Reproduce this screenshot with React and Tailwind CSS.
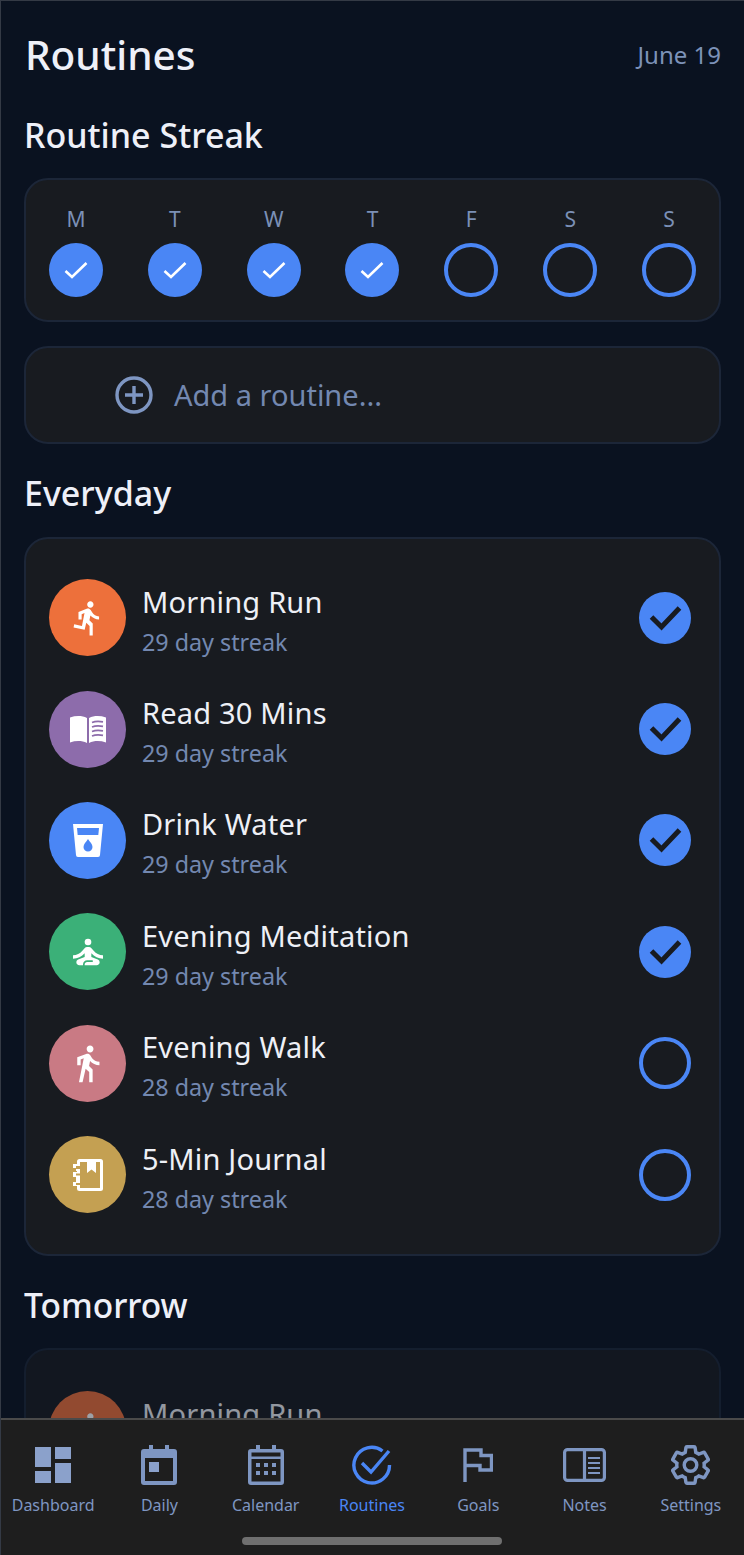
import React from "react";

const font = { fontFamily: '"Noto Sans", sans-serif' };

const RunIcon = () => (
  <svg viewBox="0 0 24 24" className="w-[38px] h-[38px]" fill="#fff">
    <path d="M13.49 5.48c1.1 0 2-.9 2-2s-.9-2-2-2-2 .9-2 2 .9 2 2 2zm-3.6 13.9l1-4.4 2.1 2v6h2v-7.5l-2.1-2 .6-3c1.3 1.5 3.3 2.5 5.5 2.5v-2c-1.9 0-3.5-1-4.3-2.4l-1-1.6c-.4-.6-1-1-1.7-1-.3 0-.5.1-.8.1l-5.2 2.2v4.7h2v-3.4l1.8-.7-1.6 8.1-4.9-1-.4 2 7 1.4z" />
  </svg>
);

const BookIcon = () => (
  <svg viewBox="0 0 36 28" className="w-[36px] h-[28px]">
    <path d="M0 2.5C6 .5 12 .5 17 3v25c-5-2.4-11-2.4-17-.6z" fill="#fff" />
    <path d="M19 3c5-2.5 11-2.5 17-.5v24.9c-6-1.8-12-1.8-17 .6z" fill="#fff" />
    <path d="M22 7.5c3-1.2 7-1.3 11-.6M22 12c3-1.2 7-1.3 11-.6M22 16.5c3-1.2 7-1.3 11-.6M22 21c3-1.2 7-1.3 11-.6" stroke="#8d6cab" strokeWidth="1.7" fill="none" />
  </svg>
);

const CupIcon = () => (
  <svg viewBox="0 0 30 33" className="w-[30px] h-[33px]">
    <path d="M0 0h30l-3 31a2 2 0 0 1-2 2H5a2 2 0 0 1-2-2z" fill="#fff" />
    <path d="M4 4h22l-.7 7H4.7z" fill="#4a86f5" />
    <path d="M15 15c2 3 4.5 5.300 4.500 8a4.500 4.500 0 0 1-9 0c0-2.700 2.500-5 4.500-8z" fill="#4a86f5" />
  </svg>
);

const MeditateIcon = () => (
  <svg viewBox="0 0 24 24" className="w-[40px] h-[40px]" fill="#fff">
    <circle cx="12" cy="6" r="2" />
    <path d="M21 16v-2c-2.240 0-4.160-.96-5.600-2.680l-1.340-1.600C13.680 9.260 13.120 9 12.530 9h-1.050c-.59 0-1.150.26-1.530.72l-1.340 1.600C7.160 13.040 5.240 14 3 14v2c2.770 0 5.190-1.170 7-3.250V15l-3.880 1.550c-.67.27-1.120.93-1.120 1.660C5 19.200 5.800 20 6.790 20H9v-.5c0-1.380 1.120-2.500 2.500-2.500h3c.28 0 .5.220.5.500s-.22.500-.5.500h-3c-.83 0-1.500.67-1.500 1.500v.5h7.210c.99 0 1.790-.8 1.790-1.790 0-.73-.45-1.390-1.120-1.660L14 15v-2.250c1.810 2.080 4.230 3.250 7 3.250z" />
  </svg>
);

const WalkIcon = () => (
  <svg viewBox="0 0 24 24" className="w-[41px] h-[41px]" fill="#fff">
    <path d="M13.500 5.500c1.100 0 2-.9 2-2s-.9-2-2-2-2 .9-2 2 .9 2 2 2zM9.800 8.900L7 23h2.100l1.800-8 2.100 2v6h2v-7.500l-2.100-2 .6-3C14.800 12 16.800 13 19 13v-2c-1.900 0-3.500-1-4.300-2.100l-1-1.600c-.4-.6-1-1-1.700-1-.3 0-.5.1-.8.1L6 8.300V13h2V9.600l1.800-.7" />
  </svg>
);

const JournalIcon = () => (
  <svg viewBox="0 0 30 32" className="w-[30px] h-[32px]">
    <rect x="4" y="0" width="26" height="32" rx="2.500" fill="#fff" />
    <rect x="7" y="3" width="20" height="26" fill="#c4a052" />
    <path d="M14 0h9v14l-4.500-3.500L14 14z" fill="#fff" />
    <path d="M0 5h7v4H0zM3 9h4v3H3zM0 13h7v5H0zM0 23h7v4H0zM3 18h4v5H3z" fill="#fff" />
    <path d="M3 7h4v3H3zM3 14.500h4v2H3zM3 24h4v2H3z" fill="#c4a052" />
  </svg>
);

const routines = [
  { name: "Morning Run", streak: "29 day streak", color: "bg-[#ed703b]", icon: <RunIcon />, done: true },
  { name: "Read 30 Mins", streak: "29 day streak", color: "bg-[#8d6cab]", icon: <BookIcon />, done: true },
  { name: "Drink Water", streak: "29 day streak", color: "bg-[#4a86f5]", icon: <CupIcon />, done: true },
  { name: "Evening Meditation", streak: "29 day streak", color: "bg-[#3bb078]", icon: <MeditateIcon />, done: true },
  { name: "Evening Walk", streak: "28 day streak", color: "bg-[#c97a84]", icon: <WalkIcon />, done: false },
  { name: "5-Min Journal", streak: "28 day streak", color: "bg-[#c4a052]", icon: <JournalIcon />, done: false },
];

const days = [
  { label: "M", done: true },
  { label: "T", done: true },
  { label: "W", done: true },
  { label: "T", done: true },
  { label: "F", done: false },
  { label: "S", done: false },
  { label: "S", done: false },
];

const DayCircle = ({ label, done }) => (
  <div className="flex w-[54px] flex-col items-center">
    <span className="h-[24px] text-[21px] leading-[24px] text-[#7b90b6]">{label}</span>
    {done ? (
      <div className="mt-[12px] flex h-[54px] w-[54px] items-center justify-center rounded-full bg-[#4a86f5]">
        <svg viewBox="0 0 24 24" className="h-[24px] w-[24px]" fill="none" stroke="#fff" strokeWidth="2.600">
          <path d="M1.500 13l6.500 6L22.500 5" />
        </svg>
      </div>
    ) : (
      <div className="mt-[12px] h-[54px] w-[54px] rounded-full border-4 border-[#4a86f5]" />
    )}
  </div>
);

const RoutineRow = ({ name, streak, color, icon, done, hideCheck }) => (
  <div className="flex h-[111.400px] items-center">
    <div className={`flex h-[77px] w-[77px] items-center justify-center rounded-full ${color}`}>{icon}</div>
    <div className="ml-[16px] flex-1 pt-[4px]">
      <div className="text-[29px] leading-[38px] tracking-[0.2px] text-[#eef0f6]">{name}</div>
      <div className="mt-[6px] text-[23.300px] leading-[30px] text-[#7388b0]">{streak}</div>
    </div>
    {hideCheck ? null : done ? (
      <div className="mr-[5px] flex h-[52px] w-[52px] items-center justify-center rounded-full bg-[#4a86f5]">
        <svg viewBox="0 0 32 26" className="h-[26px] w-[35px]" fill="none" stroke="#181b20" strokeWidth="5">
          <path d="M2 12l10 10L30 3" />
        </svg>
      </div>
    ) : (
      <div className="mr-[5px] h-[52px] w-[52px] rounded-full border-4 border-[#4a86f5]" />
    )}
  </div>
);

const navColor = "#7e96c2";

const DashboardIcon = () => (
  <svg viewBox="0 0 36 36" className="h-[36px] w-[36px]" fill="#8ba1cb">
    <rect x="0" y="0" width="16" height="20" />
    <rect x="20" y="0" width="16" height="12" />
    <rect x="0" y="24" width="16" height="12" />
    <rect x="20" y="16" width="16" height="20" />
  </svg>
);

const DailyIcon = () => (
  <svg viewBox="0 0 36 40" className="h-[40px] w-[36px]">
    <path d="M8 0h4v4h12V0h4v4h5a3 3 0 0 1 3 3v30a3 3 0 0 1-3 3H3a3 3 0 0 1-3-3V7a3 3 0 0 1 3-3h5z" fill={navColor} />
    <rect x="4" y="13" width="28" height="23" fill="#1e1e1e" />
    <rect x="8" y="17" width="10" height="10" fill="#8ba1cb" />
  </svg>
);

const CalendarIcon = () => (
  <svg viewBox="0 0 36 40" className="h-[40px] w-[36px]">
    <path d="M8 0h4v4h12V0h4v4h5a3 3 0 0 1 3 3v30a3 3 0 0 1-3 3H3a3 3 0 0 1-3-3V7a3 3 0 0 1 3-3h5z" fill={navColor} />
    <rect x="3.500" y="7.500" width="29" height="4" fill="#1e1e1e" />
    <rect x="3.500" y="14" width="29" height="22.500" fill="#1e1e1e" />
    <path d="M8 18h4v4H8zM16 18h4v4h-4zM24 18h4v4h-4zM8 26h4v4H8zM16 26h4v4h-4zM24 26h4v4h-4z" fill={navColor} />
  </svg>
);

const RoutinesIcon = () => (
  <svg viewBox="0 0 40 40" className="h-[40px] w-[40px]" fill="none" stroke="#4a86f5" strokeWidth="3.400">
    <path d="M37.500 20a17.800 17.800 0 1 1-7-14" />
    <path d="M10 18l9 9L37 6" />
  </svg>
);

const GoalsIcon = () => (
  <svg viewBox="0 0 30 34" className="h-[34px] w-[30px]" fill="none" stroke={navColor} strokeWidth="3.400">
    <path d="M2 34V2h16v5.500h10.500v14.500H17v-4.500H2" />
  </svg>
);

const NotesIcon = () => (
  <svg viewBox="0 0 43 34" className="h-[34px] w-[43px]" fill="none" stroke={navColor} strokeWidth="3.200">
    <rect x="1.600" y="1.600" width="39.800" height="30.800" rx="3" />
    <path d="M21.500 1.600v30.800" />
    <path d="M25 10h12M25 15h12M25 20h12M25 25h12" strokeWidth="2.200" />
  </svg>
);

const SettingsIcon = () => (
  <svg viewBox="2 1.500 20 21" className="h-[40px] w-[39px]" fill="none" stroke={navColor} strokeWidth="1.800">
    <path d="M19.140 12.940c.04-.3.06-.61.06-.94 0-.32-.02-.64-.07-.94l2.030-1.580c.18-.14.23-.41.12-.61l-1.920-3.320c-.12-.22-.37-.29-.59-.22l-2.390.96c-.5-.38-1.030-.7-1.620-.94l-.36-2.540c-.04-.24-.24-.41-.48-.41h-3.840c-.24 0-.43.17-.47.41l-.36 2.540c-.59.24-1.130.57-1.620.94l-2.390-.96c-.22-.08-.47 0-.59.22L2.740 8.870c-.12.21-.08.47.12.61l2.030 1.580c-.05.3-.09.63-.09.94s.02.64.07.94l-2.030 1.580c-.18.14-.23.41-.12.61l1.920 3.320c.12.22.37.29.59.22l2.390-.96c.5.38 1.030.7 1.620.94l.36 2.540c.05.24.24.41.48.41h3.840c.24 0 .44-.17.47-.41l.36-2.540c.59-.24 1.130-.56 1.620-.94l2.390.96c.22.08.47 0 .59-.22l1.920-3.320c.12-.22.07-.47-.12-.61l-2.010-1.580z" />
    <circle cx="12" cy="12" r="3.300" />
  </svg>
);

const tabs = [
  { label: "Dashboard", icon: <DashboardIcon /> },
  { label: "Daily", icon: <DailyIcon /> },
  { label: "Calendar", icon: <CalendarIcon /> },
  { label: "Routines", icon: <RoutinesIcon />, active: true },
  { label: "Goals", icon: <GoalsIcon /> },
  { label: "Notes", icon: <NotesIcon /> },
  { label: "Settings", icon: <SettingsIcon /> },
];

const cardClass = "rounded-[24px] border-2 border-[#1c2638] bg-[#181b20]";

export default function App() {
  return (
    <div style={font} className="flex h-[1555px] w-[744px] flex-col overflow-hidden border-t border-l border-[#343a45] bg-[#0a1220]">
      <div className="flex-1 overflow-hidden px-[23px]">
        <div className="flex h-[107px] items-center justify-between pl-[1px]">
          <h1 className="text-[40.500px] font-medium leading-[50px] text-[#eef0f8]">Routines</h1>
          <span className="text-[24px] text-[#7d92b8]">June 19</span>
        </div>
        <h2 className="h-[70px] text-[34px] font-medium leading-[54px] text-[#eef0f8]">Routine Streak</h2>
        <div className={`${cardClass} flex h-[144px] justify-between px-[23px] pt-[27px]`}>
          {days.map((d, i) => (
            <DayCircle key={i} label={d.label} done={d.done} />
          ))}
        </div>
        <div className={`${cardClass} mt-[24px] flex h-[98px] items-center pl-[89px]`}>
          <svg viewBox="0 0 38 38" className="h-[38px] w-[38px]" fill="none" stroke="#7e96c2" strokeWidth="3.400">
            <circle cx="19" cy="19" r="17" />
            <path d="M19 10v18M10 19h18" />
          </svg>
          <span className="ml-[21px] text-[29px] text-[#7388b0]">Add a routine...</span>
        </div>
        <h2 className="mt-[24px] h-[69px] text-[34px] font-medium leading-[50px] text-[#eef0f8]">Everyday</h2>
        <div className={`${cardClass} h-[719px] px-[23px] pt-[23px]`}>
          {routines.map((r) => (
            <RoutineRow key={r.name} {...r} />
          ))}
        </div>
        <h2 className="mt-[24px] h-[68px] text-[33.500px] font-medium leading-[50px] text-[#eef0f8]">Tomorrow</h2>
        <div className={`${cardClass} h-[719px] px-[23px] pt-[24px] opacity-60`}>
          <RoutineRow {...routines[0]} hideCheck />
        </div>
      </div>
      <nav className="-ml-[1px] h-[137px] shrink-0 border-t-2 border-[#4a4a4a] bg-[#1e1e1e]">
        <div className="grid grid-cols-7">
          {tabs.map((t) => (
            <div key={t.label} className="flex flex-col items-center">
              <div className="mt-[24px] flex h-[42px] items-center justify-center">{t.icon}</div>
              <span className={`mt-[7px] text-[16px] leading-[24px] ${t.active ? "text-[#4a86f5]" : "text-[#7e96c2]"}`}>{t.label}</span>
            </div>
          ))}
        </div>
        <div className="mx-auto mt-[20px] h-[8px] w-[260px] rounded-full bg-[#6f6f6f]" />
      </nav>
    </div>
  );
}
